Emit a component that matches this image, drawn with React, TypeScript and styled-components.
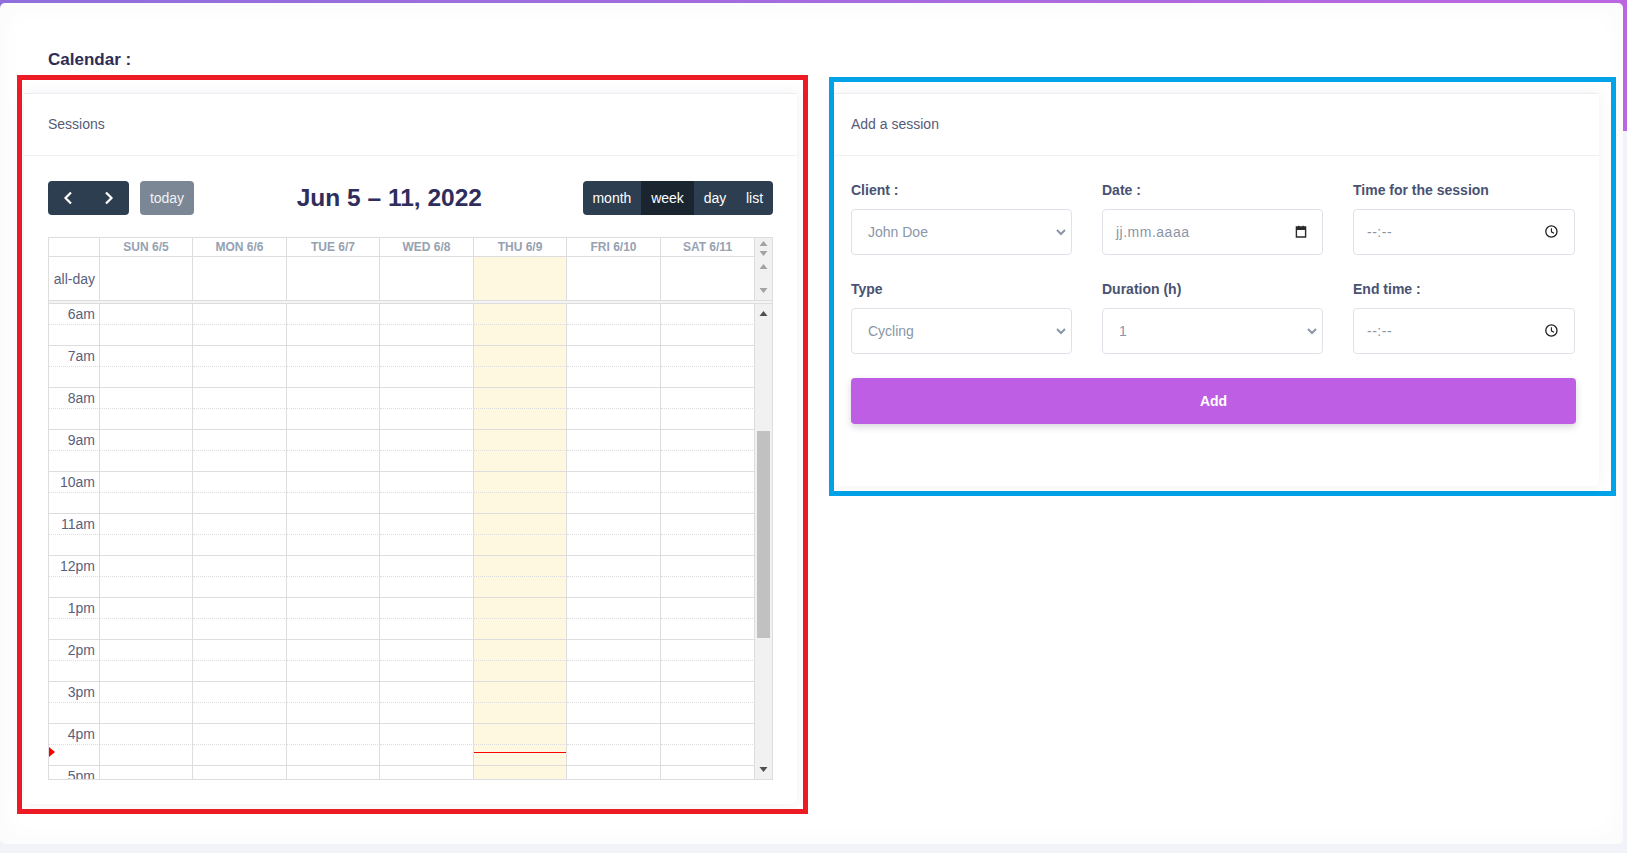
import React from 'react';
import styled, { createGlobalStyle } from 'styled-components';

const GlobalStyle = createGlobalStyle`
  html, body {
    margin: 0;
    padding: 0;
    background: #f1f3f9;
    font-family: "Liberation Sans", Arial, sans-serif;
    font-size: 14px;
    color: #555b78;
  }
  * {
    box-sizing: border-box;
  }
`;

const Page = styled.div`
  width: 1627px;
  height: 853px;
  overflow: hidden;
  padding: 3px 4px 9px 0;
  background: #f1f3f9 linear-gradient(90deg, #8f6fdc, #bb66e0) no-repeat 0 0 / 100% 131px;
`;

const Sheet = styled.div`
  height: 841px;
  background: #fff;
  border-radius: 5px;
  padding: 47px 0 0 17px;
  box-shadow: inset 0 0 28px rgba(60, 60, 110, 0.03);
`;

const Heading = styled.div`
  margin-left: 31px;
  font-size: 17px;
  line-height: 19px;
  height: 25px;
  font-weight: bold;
  color: #2f2d55;
`;

const Columns = styled.div`
  display: flex;
  align-items: flex-start;
  gap: 21px;
`;

const Frame = styled.div<{ $color: string; $width: number; $top: number }>`
  width: ${p => p.$width}px;
  margin-top: ${p => p.$top}px;
  border: 5px solid ${p => p.$color};
  flex: none;
`;

const Panel = styled.div<{ $margin: string; $height: number }>`
  margin: ${p => p.$margin};
  height: ${p => p.$height}px;
  background: #fff;
  border-top: 1px solid #eceef2;
  border-radius: 0 0 6px 6px;
  box-shadow: 0 0 14px rgba(60, 60, 110, 0.07);
`;

const PanelTitle = styled.div<{ $left: number }>`
  height: 62px;
  padding-left: ${p => p.$left}px;
  line-height: 60px;
  border-bottom: 1px solid #eff0f3;
  color: #555b78;
`;

const CalendarBody = styled.div`
  padding: 25px 24px 0;
`;

const Toolbar = styled.div`
  display: flex;
  align-items: center;
  justify-content: space-between;
  height: 34px;
  margin-bottom: 22px;
`;

const ToolbarSide = styled.div`
  display: flex;
  gap: 11px;
`;

const ButtonGroup = styled.div`
  display: flex;
  height: 34px;
  border-radius: 4px;
  overflow: hidden;
  background: #2c3e50;
`;

const NavButton = styled.button`
  width: 40.5px;
  height: 34px;
  padding: 0;
  border: 0;
  background: none;
  display: flex;
  align-items: center;
  justify-content: center;
`;

const TodayButton = styled.button`
  width: 54px;
  height: 34px;
  padding: 0;
  border: 0;
  border-radius: 4px;
  background: #7b8794;
  color: #f0f2f4;
  font: 14px "Liberation Sans", Arial, sans-serif;
`;

const ViewButton = styled.button<{ $active?: boolean }>`
  height: 34px;
  padding: 0 9.9px;
  border: 0;
  background: ${p => (p.$active ? '#1a252f' : 'transparent')};
  color: #fff;
  font: 14px "Liberation Sans", Arial, sans-serif;
`;

const RangeTitle = styled.h2`
  margin: 0 0 0 2px;
  font-size: 24.5px;
  line-height: 34px;
  font-weight: bold;
  color: #2f2d5b;
`;

const Calendar = styled.div`
  width: 725px;
  height: 543px;
  border: 1px solid #ddd;
  display: flex;
  flex-direction: column;
  overflow: hidden;
`;

const HeadSection = styled.div`
  display: flex;
  height: 62px;
  flex: none;
`;

const BodySection = styled.div`
  display: flex;
  flex: 1;
  min-height: 0;
`;

const SectionDivider = styled.div`
  height: 4px;
  flex: none;
  background: #f4f4f4;
  border-top: 1px solid #ddd;
  border-bottom: 1px solid #ddd;
`;

const GridArea = styled.div`
  width: 706px;
  flex: none;
  overflow: hidden;
`;

const Row = styled.div`
  display: grid;
  grid-template-columns: 51px 93px 94px 93px 94px 93px 94px 94px;
`;

const DayHead = styled.div`
  height: 19px;
  border-right: 1px solid #ddd;
  border-bottom: 1px solid #ddd;
  text-align: center;
  font-size: 12px;
  line-height: 19px;
  font-weight: bold;
  color: #95a2b2;
`;

const AllDayCell = styled.div<{ $today?: boolean }>`
  height: 43px;
  border-right: 1px solid #ddd;
  background: ${p => (p.$today ? '#fef8e1' : 'transparent')};
`;

const AllDayLabel = styled(AllDayCell)`
  padding-right: 4px;
  text-align: right;
  line-height: 45px;
  color: #5a5f7d;
`;

const Slot = styled.div<{ $today?: boolean; $half?: boolean }>`
  position: relative;
  height: 21px;
  border-right: 1px solid #ddd;
  border-bottom: 1px ${p => (p.$half ? 'dotted' : 'solid')} #ddd;
  background: ${p => (p.$today ? '#fef8e1' : 'transparent')};
`;

const TimeLabel = styled(Slot)`
  padding-right: 4px;
  text-align: right;
  line-height: 20px;
  color: #5a5f7d;
`;

const NowLine = styled.div`
  position: absolute;
  left: 0;
  right: 0;
  top: 7px;
  height: 1px;
  background: #f00;
`;

const NowArrow = styled.div`
  position: absolute;
  left: 0;
  top: 2px;
  border-style: solid;
  border-width: 5px 0 5px 6px;
  border-color: transparent transparent transparent #f00;
`;

const Gutter = styled.div`
  width: 17px;
  flex: none;
  background: #f1f1f1;
  display: flex;
  flex-direction: column;
  align-items: center;
`;

const HeadArrows = styled.div`
  height: 19px;
  display: flex;
  flex-direction: column;
  align-items: center;
  gap: 5px;
  padding-top: 3px;
`;

const AllDayArrows = styled.div`
  height: 43px;
  display: flex;
  flex-direction: column;
  align-items: center;
  justify-content: space-between;
  padding: 7px 0 7px;
`;

const ScrollTrack = styled(Gutter)`
  justify-content: space-between;
  padding: 7px 0 7px;
`;

const ScrollThumb = styled.div`
  width: 13px;
  height: 207px;
  margin-top: 115px;
  margin-bottom: auto;
  background: #c1c1c1;
`;

const Form = styled.div`
  padding: 25px 0 0 17px;
  width: 742px;
`;

const FieldGrid = styled.div`
  display: grid;
  grid-template-columns: 221px 221px 222px;
  column-gap: 30px;
  row-gap: 25px;
`;

const Field = styled.div`
  display: flex;
  flex-direction: column;
`;

const FieldLabel = styled.label`
  height: 18px;
  margin-bottom: 10px;
  font-size: 14px;
  line-height: 18px;
  font-weight: bold;
  color: #495272;
`;

const Select = styled.select`
  appearance: none;
  width: 100%;
  height: 46px;
  padding: 0 24px 0 16px;
  background: #fff url("data:image/svg+xml,%3Csvg xmlns='http://www.w3.org/2000/svg' width='10' height='7'%3E%3Cpath d='M1 1l4 4 4-4' fill='none' stroke='%238a96a8' stroke-width='2'/%3E%3C/svg%3E") no-repeat right 5px center;
  border: 1px solid #e0e2e9;
  border-radius: 4px;
  font: 14px "Liberation Sans", Arial, sans-serif;
  color: #8a96a8;
`;

const MaskedInput = styled.div`
  height: 46px;
  display: flex;
  align-items: center;
  justify-content: space-between;
  padding: 0 15px 0 13px;
  border: 1px solid #e0e2e9;
  border-radius: 4px;
  font-size: 14px;
  letter-spacing: 0.5px;
  color: #8a96a8;
`;

const AddButton = styled.button`
  display: block;
  width: 725px;
  height: 46px;
  margin-top: 24px;
  border: 0;
  border-radius: 4px;
  background: #bd5ee5;
  color: #fff;
  font: bold 14px "Liberation Sans", Arial, sans-serif;
  box-shadow: 0 3px 7px rgba(60, 60, 90, 0.2);
`;

const Triangle: React.FC<{ down?: boolean; dark?: boolean }> = ({ down, dark }) => (
  <svg width="9" height="5" viewBox="0 0 9 5" style={{ display: 'block' }}>
    <path
      d={down ? 'M0.5 0H8.5L4.5 5Z' : 'M4.5 0L8.5 5H0.5Z'}
      fill={dark ? '#505050' : '#a3a3a3'}
    />
  </svg>
);

const Chevron: React.FC<{ left?: boolean }> = ({ left }) => (
  <svg width="10" height="14" viewBox="0 0 10 14">
    <path
      d={left ? 'M8 1.5L2.5 7L8 12.5' : 'M2 1.5L7.5 7L2 12.5'}
      fill="none"
      stroke="#fff"
      strokeWidth="2.2"
    />
  </svg>
);

const CalendarIcon = () => (
  <svg width="14" height="14" viewBox="0 0 14 14">
    <path d="M3.4 2h9.2v10H3.4z" fill="none" stroke="#2a2a2a" strokeWidth="1.4" />
    <path d="M3.4 2h9.2v3H3.4zM5 0.7h1.4v2H5zM9.6 0.7h1.4v2H9.6z" fill="#2a2a2a" />
  </svg>
);

const ClockIcon = () => (
  <svg width="14" height="14" viewBox="0 0 14 14">
    <circle cx="6.4" cy="6.5" r="5.6" fill="none" stroke="#1f1f1f" strokeWidth="1.3" />
    <path d="M6.4 3.2V6.8L9 8.2" fill="none" stroke="#1f1f1f" strokeWidth="1.1" />
  </svg>
);

const days = ['SUN 6/5', 'MON 6/6', 'TUE 6/7', 'WED 6/8', 'THU 6/9', 'FRI 6/10', 'SAT 6/11'];
const hours = ['6am', '7am', '8am', '9am', '10am', '11am', '12pm', '1pm', '2pm', '3pm', '4pm', '5pm'];
const TODAY = 4;

const WeekGrid = () => (
  <Calendar>
    <HeadSection>
      <GridArea>
        <Row>
          <DayHead />
          {days.map(d => (
            <DayHead key={d}>{d}</DayHead>
          ))}
        </Row>
        <Row>
          <AllDayLabel>all-day</AllDayLabel>
          {days.map((d, i) => (
            <AllDayCell key={d} $today={i === TODAY} />
          ))}
        </Row>
      </GridArea>
      <Gutter>
        <HeadArrows>
          <Triangle />
          <Triangle down />
        </HeadArrows>
        <AllDayArrows>
          <Triangle />
          <Triangle down />
        </AllDayArrows>
      </Gutter>
    </HeadSection>
    <SectionDivider />
    <BodySection>
      <GridArea>
        {hours.map(h => (
          <React.Fragment key={h}>
            <Row>
              <TimeLabel $half>{h}</TimeLabel>
              {days.map((d, i) => (
                <Slot key={d} $half $today={i === TODAY} />
              ))}
            </Row>
            <Row>
              <TimeLabel>{h === '4pm' && <NowArrow />}</TimeLabel>
              {days.map((d, i) => (
                <Slot key={d} $today={i === TODAY}>
                  {h === '4pm' && i === TODAY && <NowLine />}
                </Slot>
              ))}
            </Row>
          </React.Fragment>
        ))}
      </GridArea>
      <ScrollTrack>
        <Triangle dark />
        <ScrollThumb />
        <Triangle dark down />
      </ScrollTrack>
    </BodySection>
  </Calendar>
);

const App: React.FC = () => {
  return (
    <Page>
      <GlobalStyle />
      <Sheet>
        <Heading>Calendar :</Heading>
        <Columns>
          <Frame $color="#ed1c24" $width={791} $top={0}>
            <Panel $margin="13px 6px 5px 2px" $height={711}>
              <PanelTitle $left={24}>Sessions</PanelTitle>
              <CalendarBody>
                <Toolbar>
                  <ToolbarSide>
                    <ButtonGroup>
                      <NavButton>
                        <Chevron left />
                      </NavButton>
                      <NavButton>
                        <Chevron />
                      </NavButton>
                    </ButtonGroup>
                    <TodayButton>today</TodayButton>
                  </ToolbarSide>
                  <RangeTitle>Jun 5 – 11, 2022</RangeTitle>
                  <ButtonGroup>
                    <ViewButton>month</ViewButton>
                    <ViewButton $active>week</ViewButton>
                    <ViewButton>day</ViewButton>
                    <ViewButton>list</ViewButton>
                  </ButtonGroup>
                </Toolbar>
                <WeekGrid />
              </CalendarBody>
            </Panel>
          </Frame>
          <Frame $color="#00a2e8" $width={787} $top={2}>
            <Panel $margin="11px 12px 5px 0" $height={393}>
              <PanelTitle $left={17}>Add a session</PanelTitle>
              <Form>
                <FieldGrid>
                  <Field>
                    <FieldLabel>Client :</FieldLabel>
                    <Select defaultValue="John Doe">
                      <option>John Doe</option>
                    </Select>
                  </Field>
                  <Field>
                    <FieldLabel>Date :</FieldLabel>
                    <MaskedInput>
                      jj.mm.aaaa
                      <CalendarIcon />
                    </MaskedInput>
                  </Field>
                  <Field>
                    <FieldLabel>Time for the session</FieldLabel>
                    <MaskedInput>
                      --:--
                      <ClockIcon />
                    </MaskedInput>
                  </Field>
                  <Field>
                    <FieldLabel>Type</FieldLabel>
                    <Select defaultValue="Cycling">
                      <option>Cycling</option>
                    </Select>
                  </Field>
                  <Field>
                    <FieldLabel>Duration (h)</FieldLabel>
                    <Select defaultValue="1">
                      <option>1</option>
                    </Select>
                  </Field>
                  <Field>
                    <FieldLabel>End time :</FieldLabel>
                    <MaskedInput>
                      --:--
                      <ClockIcon />
                    </MaskedInput>
                  </Field>
                </FieldGrid>
                <AddButton>Add</AddButton>
              </Form>
            </Panel>
          </Frame>
        </Columns>
      </Sheet>
    </Page>
  );
};

export default App;
